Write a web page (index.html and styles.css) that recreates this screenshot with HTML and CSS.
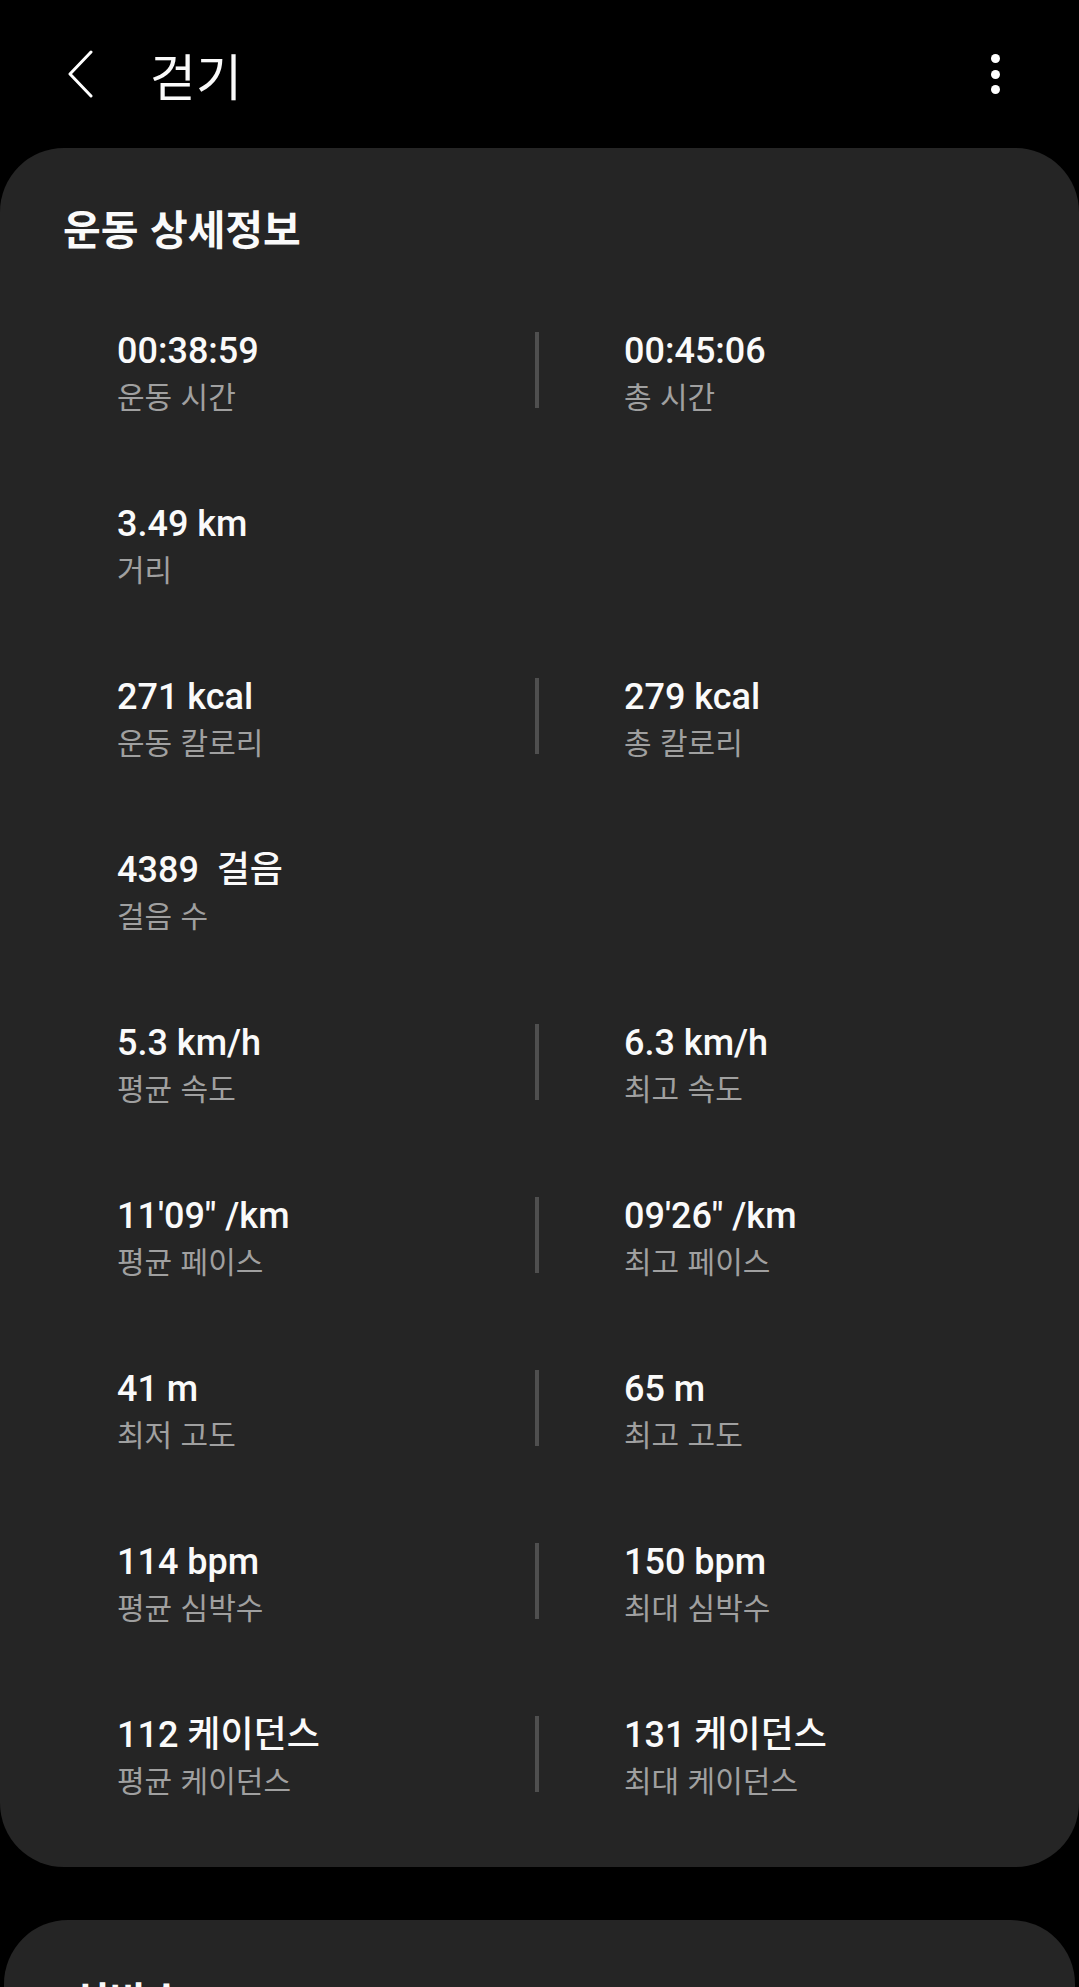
FILE: index.html
```html
<!DOCTYPE html>
<html lang="ko">
<head>
    <meta charset="UTF-8">
    <meta name="viewport" content="width=device-width, initial-scale=1.0">
    <title>걷기</title>
    <link rel="stylesheet" href="styles.css">
</head>
<body>

    <!-- Top bar -->
    <header class="app-bar">
        <button class="back-btn" aria-label="뒤로">
            <svg width="28" height="48" viewBox="0 0 28 48">
                <polyline points="24,2 3,24 24,46" fill="none" stroke="#fff" stroke-width="3" stroke-linecap="round" stroke-linejoin="round"/>
            </svg>
        </button>
        <h1 class="app-title">걷기</h1>
        <button class="more-btn" aria-label="더보기">
            <span></span><span></span><span></span>
        </button>
    </header>

    <!-- Workout details -->
    <section class="card">
        <h2 class="card-title">운동 상세정보</h2>

        <div class="stats">
            <div class="stat-row">
                <div class="stat"><p class="value">00:38:59</p><p class="label">운동 시간</p></div>
                <div class="divider"></div>
                <div class="stat right"><p class="value">00:45:06</p><p class="label">총 시간</p></div>
            </div>

            <div class="stat-row">
                <div class="stat"><p class="value">3.49 km</p><p class="label">거리</p></div>
            </div>

            <div class="stat-row">
                <div class="stat"><p class="value">271 kcal</p><p class="label">운동 칼로리</p></div>
                <div class="divider"></div>
                <div class="stat right"><p class="value">279 kcal</p><p class="label">총 칼로리</p></div>
            </div>

            <div class="stat-row">
                <div class="stat"><p class="value">4389&nbsp; 걸음</p><p class="label">걸음 수</p></div>
            </div>

            <div class="stat-row">
                <div class="stat"><p class="value">5.3 km/h</p><p class="label">평균 속도</p></div>
                <div class="divider"></div>
                <div class="stat right"><p class="value">6.3 km/h</p><p class="label">최고 속도</p></div>
            </div>

            <div class="stat-row">
                <div class="stat"><p class="value">11'09" /km</p><p class="label">평균 페이스</p></div>
                <div class="divider"></div>
                <div class="stat right"><p class="value">09'26" /km</p><p class="label">최고 페이스</p></div>
            </div>

            <div class="stat-row">
                <div class="stat"><p class="value">41 m</p><p class="label">최저 고도</p></div>
                <div class="divider"></div>
                <div class="stat right"><p class="value">65 m</p><p class="label">최고 고도</p></div>
            </div>

            <div class="stat-row">
                <div class="stat"><p class="value">114 bpm</p><p class="label">평균 심박수</p></div>
                <div class="divider"></div>
                <div class="stat right"><p class="value">150 bpm</p><p class="label">최대 심박수</p></div>
            </div>

            <div class="stat-row">
                <div class="stat"><p class="value">112 케이던스</p><p class="label">평균 케이던스</p></div>
                <div class="divider"></div>
                <div class="stat right"><p class="value">131 케이던스</p><p class="label">최대 케이던스</p></div>
            </div>
        </div>
    </section>

    <!-- Next card, cut off by the screen -->
    <section class="card card-next">
        <h2 class="card-title">심박수</h2>
    </section>

</body>
</html>
```

FILE: styles.css
```css
body {
    margin: 0;
    background: #000;
    color: #fafafa;
    font-family: Roboto, "Noto Sans CJK KR", sans-serif;
    width: 1079px;
    height: 1987px;
    overflow: hidden;
}

p, h1, h2 {
    margin: 0;
}

button {
    background: none;
    border: none;
    padding: 0;
    cursor: pointer;
}

/* header */
.app-bar {
    height: 148px;
    display: flex;
    align-items: center;
}

.back-btn {
    margin-left: 67px;
    width: 28px;
    height: 48px;
    display: flex;
}

.app-title {
    margin-left: 55px;
    font-family: "Noto Sans CJK KR", sans-serif;
    font-size: 50px;
    font-weight: 400;
    line-height: 60px;
    flex: 1;
}

.more-btn {
    width: 20px;
    margin-right: 74px;
    display: flex;
    flex-direction: column;
    align-items: center;
    gap: 6.5px;
}

.more-btn span {
    width: 9px;
    height: 9px;
    border-radius: 50%;
    background: #fff;
}

/* cards */
.card {
    background: #252525;
    border-radius: 64px;
    padding: 54px 0 72px;
}

.card-title {
    margin-left: 63px;
    font-family: "Noto Sans CJK KR", sans-serif;
    font-size: 41px;
    font-weight: 700;
    line-height: 50px;
}

.stats {
    margin-top: 77px;
    display: flex;
    flex-direction: column;
    gap: 91px;
}

.stat-row {
    height: 82px;
    display: grid;
    grid-template-columns: 418px 4px 1fr;
    padding-left: 117px;
}

.stat.right {
    padding-left: 85px;
}

.divider {
    background: #4f4f4f;
    margin-top: 3px;
    height: 76px;
}

.value {
    font-size: 36px;
    font-weight: 500;
    line-height: 44px;
    white-space: nowrap;
}

.label {
    font-family: "Noto Sans CJK KR", sans-serif;
    font-size: 30px;
    line-height: 38px;
    margin-top: 3px;
    color: #a0a0a0;
}

.card-next {
    margin-top: 53px;
    margin-left: 4px;
    margin-right: 4px;
    height: 200px;
    padding-top: 54px;
}

.card-next .card-title {
    margin-left: 68px;
}
```
